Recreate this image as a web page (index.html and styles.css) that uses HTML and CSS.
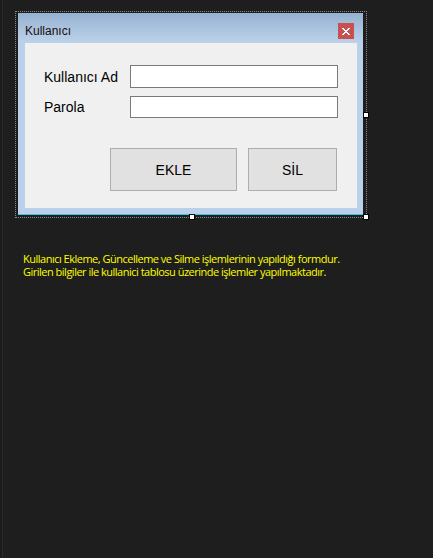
FILE: index.html
```html
<!DOCTYPE html>
<html lang="tr">
<head>
<meta charset="utf-8">
<title>Kullanıcı</title>
<link rel="stylesheet" href="styles.css">
</head>
<body>
<div class="designer">
  <div class="selection">
    <div class="form">
      <div class="titlebar">
        <span class="title">Kullanıcı</span>
        <span class="close">
          <svg width="8" height="7" viewBox="0 0 8 7"><path d="M0 0h2v1h1v1h2v-1h1v-1h2v1h-1v1h-1v1h-1v1h1v1h1v1h1v1h-2v-1h-1v-1h-2v1h-1v1h-2v-1h1v-1h1v-1h1v-1h-1v-1h-1v-1h-1z" fill="#fff"/></svg>
        </span>
      </div>
      <div class="client">
        <div class="fields">
          <label class="lbl">Kullanıcı Ad</label>
          <div class="textbox"></div>
          <label class="lbl">Parola</label>
          <div class="textbox tb2"></div>
        </div>
        <div class="buttons">
          <div class="btn ekle">EKLE</div>
          <div class="btn sil">SİL</div>
        </div>
      </div>
    </div>
    <span class="handle h-right"></span>
    <span class="handle h-bottom"></span>
    <span class="handle h-corner"></span>
  </div>
  <p class="note">Kullanıcı Ekleme, Güncelleme ve Silme işlemlerinin yapıldığı formdur.<br>Girilen bilgiler ile kullanici tablosu üzerinde işlemler yapılmaktadır.</p>
</div>
</body>
</html>
```

FILE: styles.css
```css
html, body {
  margin: 0;
  padding: 0;
  background: #1e1e1e;
  height: 100%;
}
body {
  font-family: "Liberation Sans", Arial, sans-serif;
  border-left: 2px solid #1b1b1b;
  box-shadow: inset 1px 0 0 #2a2a2a;
}
.designer {
  padding: 11px 0 0 13px;
}
.selection {
  position: relative;
  width: 345px;
  border: 1px dotted #8a8a8a;
  padding: 1px 3px 2px 2px;
}
.form {
  width: 345px;
  background: #b9d1ea;
  border-bottom: 1px solid #3fc2e8;
}
.titlebar {
  height: 30px;
  box-sizing: border-box;
  display: flex;
  align-items: center;
  justify-content: space-between;
  padding: 6px 9px 0 7px;
  background: linear-gradient(#96b2d1, #bcd2ea);
}
.title {
  font-size: 12px;
  color: #1a0a0a;
}
.close {
  width: 16px;
  height: 16px;
  background: #c75050;
  display: flex;
  align-items: center;
  justify-content: center;
}
.client {
  margin: 0 6px 0 7px;
  background: #f0f0f0;
  box-sizing: border-box;
  padding: 22px 19px 0 19px;
  border-bottom: 6px solid #b9d1ea;
  height: 171px;
}
.fields {
  display: grid;
  grid-template-columns: 86px 208px;
  grid-template-rows: 23px 22px;
  row-gap: 8px;
  align-items: center;
}
.lbl {
  font-size: 14px;
  color: #000;
  line-height: 16px;
}
.textbox {
  height: 23px;
  box-sizing: border-box;
  border: 1px solid #7a7a7a;
  background: #fff;
}
.tb2 {
  height: 22px;
}
.buttons {
  display: flex;
  justify-content: flex-end;
  gap: 11px;
  margin-top: 30px;
  padding-right: 1px;
}
.btn {
  height: 43px;
  box-sizing: border-box;
  border: 1px solid #adadad;
  background: #e1e1e1;
  display: flex;
  align-items: center;
  justify-content: center;
  font-size: 14px;
  color: #000;
}
.ekle { width: 127px; }
.sil { width: 89px; }
.handle {
  position: absolute;
  width: 4px;
  height: 4px;
  background: #fff;
  border: 1px solid #000;
}
.h-right { right: -3px; top: 100px; }
.h-bottom { left: 173px; bottom: -3px; }
.h-corner { right: -3px; bottom: -3px; }
.note {
  margin: 34px 0 0 8px;
  font-family: "Open Sans", sans-serif;
  font-size: 11px;
  line-height: 13px;
  letter-spacing: -0.5px;
  color: #ffff00;
}
```
